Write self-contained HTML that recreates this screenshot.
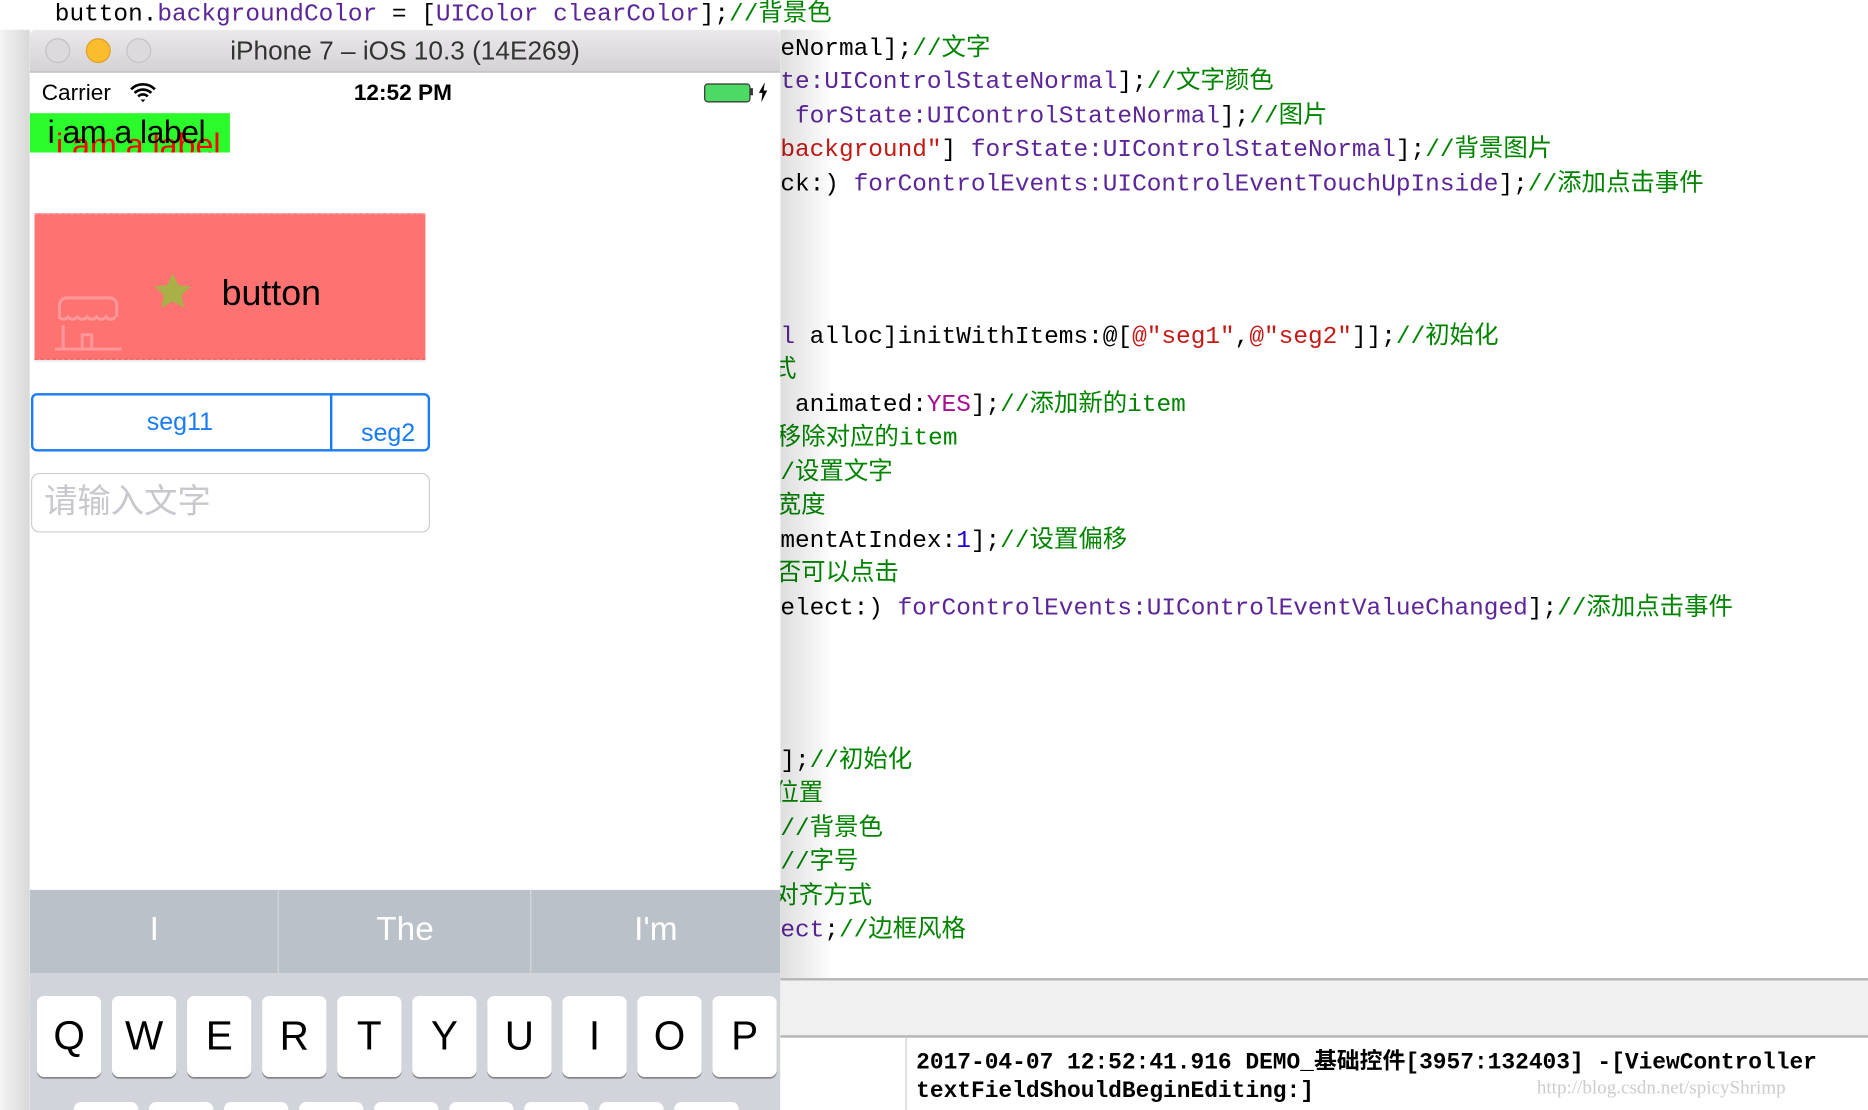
<!DOCTYPE html>
<html><head><meta charset="utf-8"><style>
html,body{margin:0;padding:0;width:1868px;height:1110px;overflow:hidden;background:#fff}
#w{position:absolute;left:0;top:0;width:1568px;height:932px;overflow:hidden;transform:scale(1.19133);transform-origin:0 0;font-family:"Liberation Sans","Noto Sans CJK SC",sans-serif}
.a{position:absolute}
.code{position:absolute;font-family:"Liberation Mono","Noto Sans CJK SC",monospace;font-size:20.5px;white-space:pre;line-height:28px;color:#000}
.p{color:#5c2699}.g{color:#008400}.r{color:#c41a16}.b{color:#1c00cf}.k{color:#aa0d91}.d{color:#3f6e74}
.key{position:absolute;top:836px;width:54px;height:68px;background:#fff;border-radius:6px;box-shadow:0 1.5px 0 #888;font-size:34px;text-align:center;line-height:68px;color:#000}
.sg{position:absolute;top:747px;height:70px;line-height:66px;font-size:28px;color:#fff;text-align:center}
</style></head><body><div id="w">
<div class="code" style="left:46px;top:-1px">button.<span class="p">backgroundColor</span> = [<span class="p">UIColor</span> <span class="p">clearColor</span>];<span class="g">//背景色</span></div>
<div class="code" style="left:655px;top:28px">eNormal];<span class="g">//文字</span></div>
<div class="code" style="left:655px;top:56px"><span class="p">te:UIControlStateNormal</span>];<span class="g">//文字颜色</span></div>
<div class="code" style="left:655px;top:85px"> <span class="p">forState:UIControlStateNormal</span>];<span class="g">//图片</span></div>
<div class="code" style="left:655px;top:113px"><span class="r">background"</span>] <span class="p">forState:UIControlStateNormal</span>];<span class="g">//背景图片</span></div>
<div class="code" style="left:655px;top:142px">ck:) <span class="p">forControlEvents:UIControlEventTouchUpInside</span>];<span class="g">//添加点击事件</span></div>
<div class="code" style="left:655px;top:270px"><span class="p">l</span> alloc]initWithItems:@[<span class="r">@"seg1"</span>,<span class="r">@"seg2"</span>]];<span class="g">//初始化</span></div>
<div class="code" style="left:648px;top:298px"><span class="g">式</span></div>
<div class="code" style="left:655px;top:327px"> animated:<span class="k">YES</span>];<span class="g">//添加新的item</span></div>
<div class="code" style="left:652px;top:355px"><span class="g">移除对应的item</span></div>
<div class="code" style="left:655px;top:384px"><span class="g">/设置文字</span></div>
<div class="code" style="left:652px;top:412px"><span class="g">宽度</span></div>
<div class="code" style="left:655px;top:441px">mentAtIndex:<span class="b">1</span>];<span class="g">//设置偏移</span></div>
<div class="code" style="left:652px;top:469px"><span class="g">否可以点击</span></div>
<div class="code" style="left:655px;top:498px">elect:) <span class="p">forControlEvents:UIControlEventValueChanged</span>];<span class="g">//添加点击事件</span></div>
<div class="code" style="left:655px;top:626px">];<span class="g">//初始化</span></div>
<div class="code" style="left:650px;top:654px"><span class="g">位置</span></div>
<div class="code" style="left:655px;top:683px"><span class="g">//背景色</span></div>
<div class="code" style="left:655px;top:711px"><span class="g">//字号</span></div>
<div class="code" style="left:650px;top:740px"><span class="g">对齐方式</span></div>
<div class="code" style="left:655px;top:768px"><span class="p">ect</span>;<span class="g">//边框风格</span></div>
<div class="a" style="left:0;top:821px;width:1568px;height:2px;background:#b5b5b5"></div>
<div class="a" style="left:0;top:823px;width:1568px;height:47px;background:#f0f0f0"></div>
<div class="a" style="left:0;top:869px;width:1568px;height:2px;background:#b5b5b5"></div>
<div class="a" style="left:7px;top:840px;width:18px;height:13px;background:#6f98cf"></div>
<div class="a" style="left:760px;top:871px;width:1px;height:61px;background:#ccc"></div>
<div class="code" style="left:769px;top:880px;font-weight:bold;line-height:24px;font-size:19.2px">2017-04-07 12:52:41.916 DEMO_基础控件[3957:132403] -[ViewController
textFieldShouldBeginEditing:]</div>
<div class="a" style="left:1290px;top:905px;font-family:'Liberation Serif',serif;font-size:16px;color:#ccc">http://blog.csdn.net/spicyShrimp</div>
<div class="a" style="left:0;top:25px;width:25px;height:907px;background:linear-gradient(90deg,#f4f4f4,#d8d8d8)"></div>
<div class="a" style="left:655px;top:25px;width:45px;height:796px;background:linear-gradient(90deg,rgba(0,0,0,.13),rgba(0,0,0,0))"></div>
<div class="a" style="left:25px;top:25px;width:630px;height:907px;background:#fff;overflow:hidden;border-radius:5px 5px 0 0">
 <div class="a" style="left:0;top:0;width:630px;height:35px;background:linear-gradient(#ebe9eb,#d4d2d4);border-bottom:1px solid #b8b8b8"></div>
 <div class="a" style="left:13px;top:7px;width:19px;height:19px;border-radius:50%;background:#dcdadc;border:1px solid #c4c2c4"></div>
 <div class="a" style="left:47px;top:7px;width:19px;height:19px;border-radius:50%;background:#fbbd2e;border:1px solid #e0a028"></div>
 <div class="a" style="left:81px;top:7px;width:19px;height:19px;border-radius:50%;background:#dcdadc;border:1px solid #c4c2c4"></div>
 <div class="a" style="left:0;top:5px;width:630px;text-align:center;font-size:22px;color:#333">iPhone 7 – iOS 10.3 (14E269)</div>
 <div class="a" style="left:10px;top:43px;font-size:19px">Carrier</div>
 <svg class="a" style="left:84px;top:44px" width="22" height="17" viewBox="0 0 22 17"><path d="M1 6a14 14 0 0 1 20 0M4 9a10 10 0 0 1 14 0M7 12a5.5 5.5 0 0 1 8 0" stroke="#000" stroke-width="2.2" fill="none"/><path d="M9 14.5l2 2.3 2-2.3z" fill="#000"/></svg>
 <div class="a" style="left:272px;top:43px;font-size:19px;font-weight:bold">12:52 PM</div>
 <div class="a" style="left:566px;top:45px;width:37px;height:14px;border:1px solid #333;border-radius:3px;background:#4cd964"></div>
 <div class="a" style="left:605px;top:49px;width:2px;height:6px;background:#333"></div>
 <svg class="a" style="left:611px;top:44px" width="9" height="17" viewBox="0 0 9 17"><path d="M6 0L1 9h3l-1 8 5-10H5z" fill="#000"/></svg>
 <div class="a" style="left:0;top:70px;width:168px;height:33px;background:#2bfb2b;overflow:hidden">
  <div class="a" style="left:22px;top:12px;font-size:27px;color:#f00;white-space:nowrap">i am a label</div>
  <div class="a" style="left:15px;top:1px;font-size:27px;color:#000;white-space:nowrap;letter-spacing:-0.5px">i am a label</div>
 </div>
 <div class="a" style="left:4px;top:154px;width:328px;height:123px;background:#fe7272;border-top:1px dashed #f9a0a0;border-bottom:1px dashed #e06060;box-sizing:border-box;box-shadow:0 2px 2px rgba(0,0,0,.1)"></div>
 <svg class="a" style="left:20px;top:221px" width="58" height="50" viewBox="0 0 58 50"><g stroke="#ff9898" stroke-width="2.5" fill="none"><path d="M5 20V10a6 6 0 0 1 6-6h36a6 6 0 0 1 6 6v10"/><path d="M4 20q5 4 8 0q4 4 8 0q4 4 8 0q4 4 8 0q4 4 8 0q4 4 8 0"/><path d="M1 47h56M8 27v20M24 47V35h8v12"/></g></svg>
 <svg class="a" style="left:103px;top:203px" width="34" height="34" viewBox="0 0 24 24"><path d="M12 1l3.3 7 7.6.8-5.7 5.1 1.6 7.6L12 17.6 5.2 21.5l1.6-7.6L1.1 8.8 8.7 8z" fill="#a9b048"/></svg>
 <div class="a" style="left:161px;top:205px;font-size:30px;color:#000">button</div>
 <div class="a" style="left:1px;top:305px;width:331px;height:45px;border:2px solid #1a7cf5;border-radius:5px"></div>
 <div class="a" style="left:252px;top:305px;width:2px;height:49px;background:#1a7cf5"></div>
 <div class="a" style="left:0;top:318px;width:252px;text-align:center;font-size:21px;color:#1a7cf5">seg11</div>
 <div class="a" style="left:278px;top:327px;font-size:21px;color:#1a7cf5">seg2</div>
 <div class="a" style="left:1px;top:372px;width:333px;height:48px;border:1px solid #ccc;border-radius:7px"></div>
 <div class="a" style="left:12px;top:374px;font-size:28px;color:#c7c7cd;font-family:'Noto Sans CJK SC',sans-serif">请输入文字</div>
 <div class="a" style="left:0;top:722px;width:630px;height:70px;background:#bbc1c9"></div>
 <div class="a" style="left:208px;top:722px;width:1px;height:70px;background:#d4d8dd"></div>
 <div class="a" style="left:420px;top:722px;width:1px;height:70px;background:#d4d8dd"></div>
 <div class="a" style="left:0;top:792px;width:630px;height:120px;background:#d1d4da"></div>
</div>
<div class="sg" style="left:25px;width:209px">I</div>
<div class="sg" style="left:234px;width:212px">The</div>
<div class="sg" style="left:446px;width:209px">I'm</div>
<div class="key" style="left:31px">Q</div><div class="key" style="left:94px">W</div><div class="key" style="left:157px">E</div><div class="key" style="left:220px">R</div><div class="key" style="left:283px">T</div><div class="key" style="left:346px">Y</div><div class="key" style="left:409px">U</div><div class="key" style="left:472px">I</div><div class="key" style="left:535px">O</div><div class="key" style="left:598px">P</div>
<div class="key" style="left:62px;top:925px"></div><div class="key" style="left:125px;top:925px"></div><div class="key" style="left:188px;top:925px"></div><div class="key" style="left:251px;top:925px"></div><div class="key" style="left:314px;top:925px"></div><div class="key" style="left:377px;top:925px"></div><div class="key" style="left:440px;top:925px"></div><div class="key" style="left:503px;top:925px"></div><div class="key" style="left:566px;top:925px"></div>
</div></body></html>
